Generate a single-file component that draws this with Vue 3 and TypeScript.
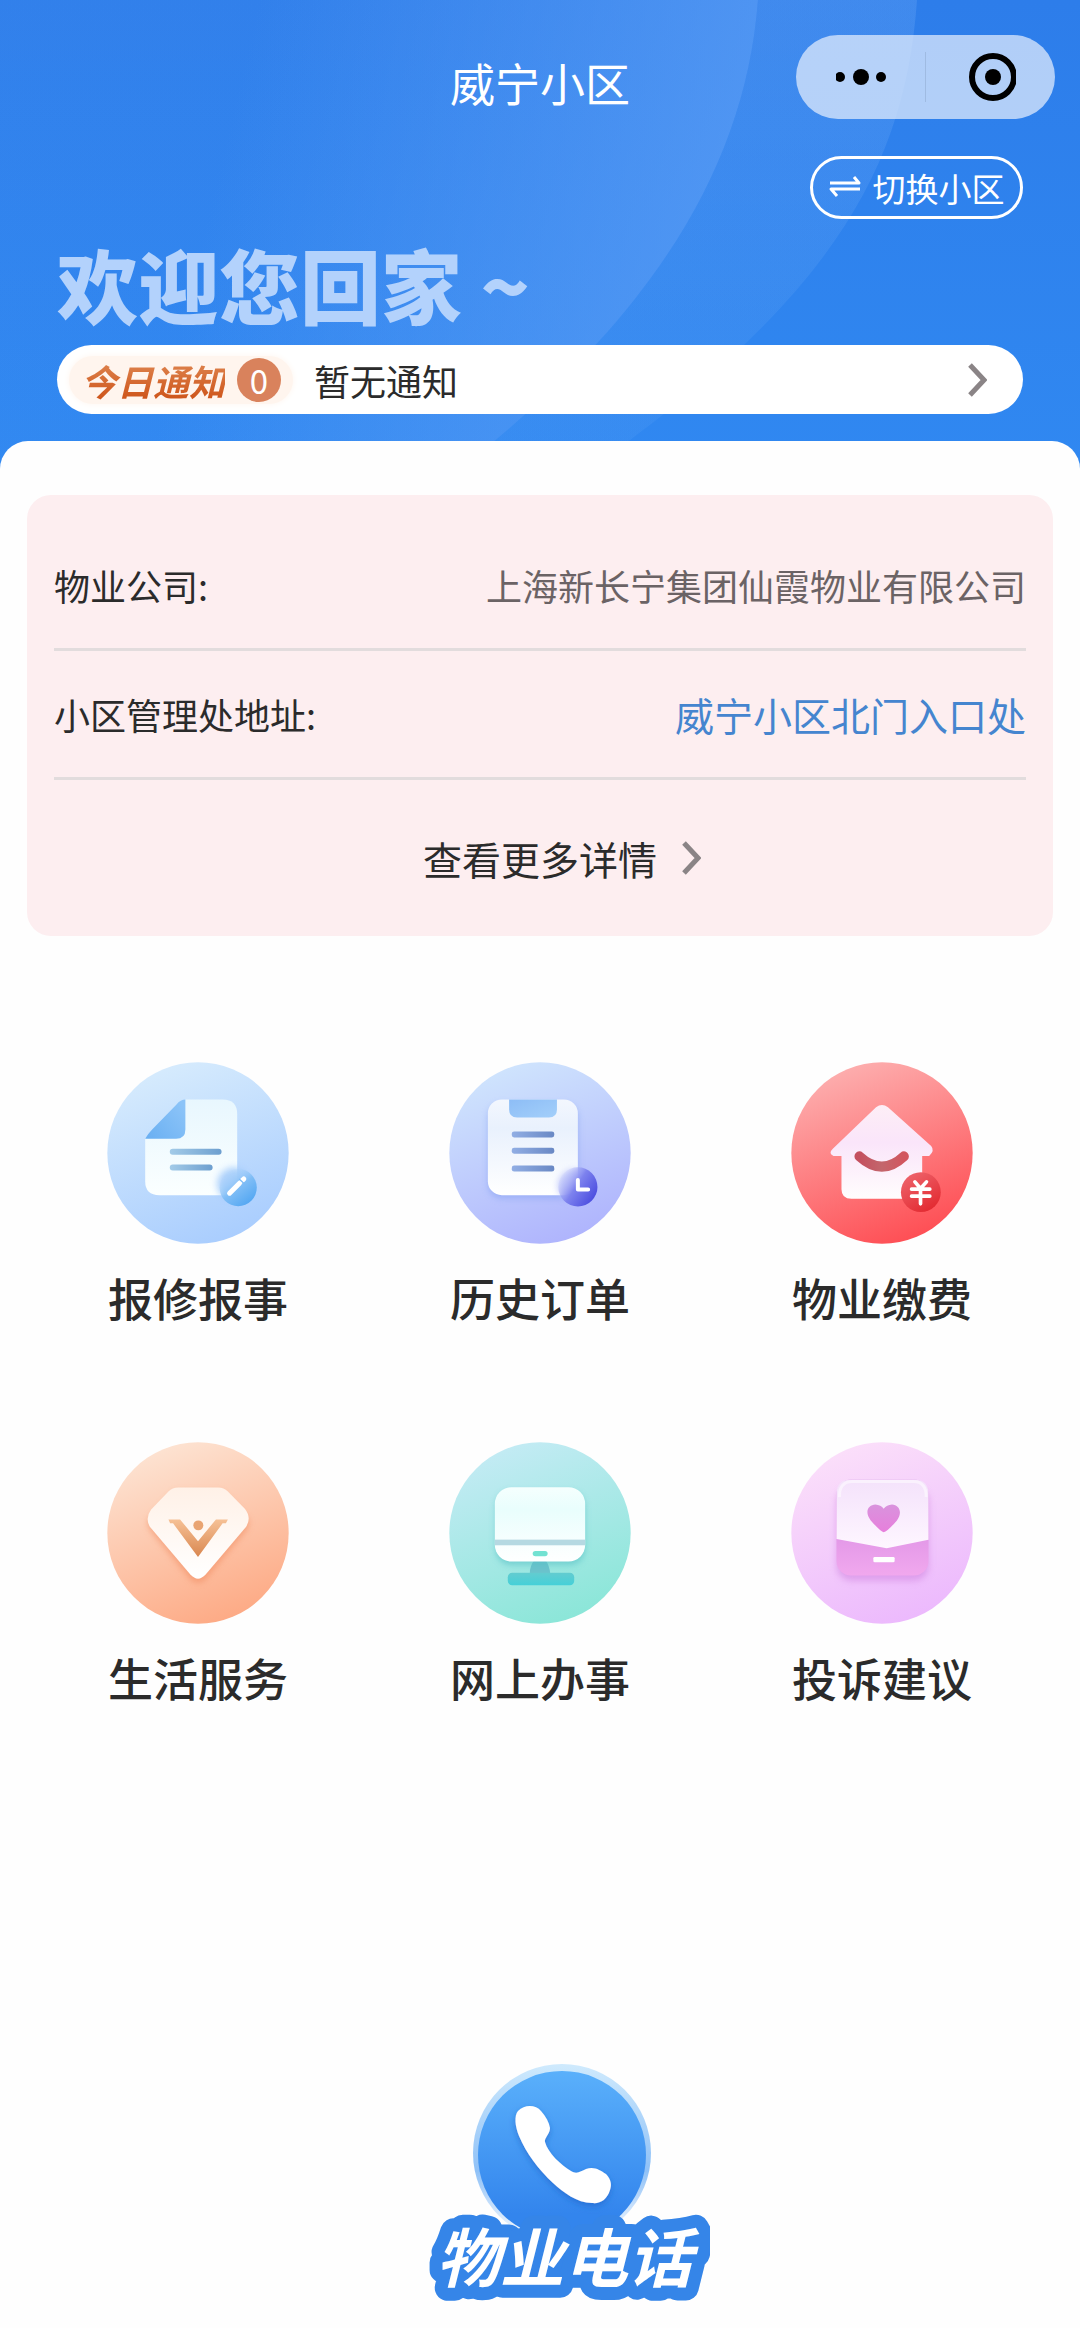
<script setup lang="ts">
type Art = 'repair' | 'orders' | 'payment' | 'life' | 'online' | 'feedback'

interface Service {
  art: Art
  label: string
  viewBox: string
  cx: number
  cy: number
  from: string
  to: string
}

interface InfoRow {
  label: string
  value: string
  link: boolean
}

const community = '威宁小区'
const noticeCount = 0

const rows: InfoRow[] = [
  { label: '物业公司:', value: '上海新长宁集团仙霞物业有限公司', link: false },
  { label: '小区管理处地址:', value: '威宁小区北门入口处', link: true },
]

const services: Service[] = [
  { art: 'repair', label: '报修报事', viewBox: '48 37 548 548', cx: 322, cy: 311, from: '#d6ebfd', to: '#a9cdfe' },
  { art: 'orders', label: '历史订单', viewBox: '55 37 548 548', cx: 329, cy: 311, from: '#cfe4fd', to: '#afb4fd' },
  { art: 'payment', label: '物业缴费', viewBox: '60 37 548 548', cx: 334, cy: 311, from: '#fdaeae', to: '#fe4e54' },
  { art: 'life', label: '生活服务', viewBox: '48 34 548 548', cx: 322, cy: 308, from: '#fde3d2', to: '#fdaa85' },
  { art: 'online', label: '网上办事', viewBox: '55 34 548 548', cx: 329, cy: 308, from: '#c3ebf4', to: '#8be6d8' },
  { art: 'feedback', label: '投诉建议', viewBox: '60 34 548 548', cx: 334, cy: 308, from: '#fbdffa', to: '#ecb9fd' },
]
</script>

<template>
  <div class="page">
    <header class="hero">
      <svg class="hero-bg" viewBox="0 0 1080 470" preserveAspectRatio="none" aria-hidden="true">
        <defs>
          <linearGradient id="sky" x1="0" y1="0" x2="0" y2="1">
            <stop offset="0" stop-color="#2d7dea" />
            <stop offset="1" stop-color="#3088f1" />
          </linearGradient>
          <linearGradient id="beam" gradientUnits="userSpaceOnUse" x1="230" y1="120" x2="740" y2="240">
            <stop offset="0" stop-color="#5b9df5" stop-opacity="0" />
            <stop offset="1" stop-color="#5b9df5" stop-opacity="0.75" />
          </linearGradient>
          <linearGradient id="fade" x1="0" y1="0" x2="0" y2="1">
            <stop offset="0" stop-color="#6aa6f5" stop-opacity="0.26" />
            <stop offset="1" stop-color="#5ba2f5" stop-opacity="0.14" />
          </linearGradient>
        </defs>
        <rect width="1080" height="470" fill="url(#sky)" />
        <path d="M0 0H917C905 170 830 300 590 470H0Z" fill="url(#fade)" opacity="0.3" />
        <path d="M758 0H917C905 170 830 300 590 470H460C650 320 745 170 758 0Z" fill="url(#fade)" />
        <path d="M0 0H758C745 170 650 320 460 470H0Z" fill="url(#beam)" />
      </svg>

      <nav class="nav">
        <h1 class="title">{{ community }}</h1>
        <div class="capsule">
          <button type="button" class="capsule-btn" aria-label="更多">
            <svg viewBox="0 0 50 50" width="50" height="50">
              <circle cx="4" cy="25" r="5" /><circle cx="25" cy="25" r="8" /><circle cx="45" cy="25" r="5" />
            </svg>
          </button>
          <span class="capsule-line"></span>
          <button type="button" class="capsule-btn" aria-label="关闭">
            <svg viewBox="0 0 50 50" width="50" height="50">
              <circle cx="27" cy="25" r="21" fill="none" stroke="#000" stroke-width="6" /><circle cx="27" cy="25" r="8" />
            </svg>
          </button>
        </div>
      </nav>

      <button type="button" class="switch">
        <svg viewBox="0 0 32 24" width="32" height="24" fill="none" stroke="#fff" stroke-width="3" stroke-linejoin="round">
          <path d="M1 7H30L25 1M31 13H2L8 20" />
        </svg>
        <span>切换小区</span>
      </button>

      <p class="welcome">欢迎您回家 ~</p>

      <button type="button" class="notice">
        <span class="notice-tag">
          <em class="notice-name">今日通知</em>
          <span class="notice-count">{{ noticeCount }}</span>
        </span>
        <span class="notice-text">暂无通知</span>
        <svg class="chevron" viewBox="0 0 20 36" width="20" height="36"><path d="M3 3L17 18L3 33" /></svg>
      </button>
    </header>

    <main class="sheet">
      <section class="card">
        <dl class="rows">
          <div v-for="row in rows" :key="row.label" class="row">
            <dt>{{ row.label }}</dt>
            <dd>
              <a v-if="row.link" href="#" class="address">{{ row.value }}</a>
              <template v-else>{{ row.value }}</template>
            </dd>
          </div>
        </dl>
        <button type="button" class="more">
          <span class="more-text">查看更多详情</span>
          <svg class="chevron" viewBox="0 0 20 36" width="20" height="36"><path d="M3 3L17 18L3 33" /></svg>
        </button>
      </section>

      <section class="services">
        <button v-for="s in services" :key="s.art" type="button" class="service">
          <svg class="service-icon" :viewBox="s.viewBox" aria-hidden="true">
            <defs>
              <linearGradient :id="`disc-${s.art}`" x1="0.3" y1="0.02" x2="0.68" y2="0.98">
                <stop offset="0" :stop-color="s.from" />
                <stop offset="1" :stop-color="s.to" />
              </linearGradient>
            </defs>
            <circle :cx="s.cx" :cy="s.cy" r="273" :fill="`url(#disc-${s.art})`" />

            <g v-if="s.art === 'repair'">
              <defs>
                <linearGradient id="r-page" x1="0" y1="0" x2="0" y2="1">
                  <stop offset="0" stop-color="#e8f7fe" /><stop offset="1" stop-color="#fbffff" />
                </linearGradient>
                <linearGradient id="r-fold" x1="0" y1="1" x2="1" y2="0.2">
                  <stop offset="0" stop-color="#69aff2" /><stop offset="1" stop-color="#8cc4f8" />
                </linearGradient>
                <linearGradient id="r-line"><stop offset="0" stop-color="#a3cbe8" /><stop offset="1" stop-color="#6d9fcf" /></linearGradient>
                <linearGradient id="r-ball" x1="0.1" y1="0.1" x2="0.8" y2="1">
                  <stop offset="0" stop-color="#b9dafc" stop-opacity="0" /><stop offset="0.5" stop-color="#7fbdf6" /><stop offset="1" stop-color="#4fa5f2" />
                </linearGradient>
                <filter id="r-glow" x="-50%" y="-50%" width="200%" height="200%"><feGaussianBlur stdDeviation="12" /></filter>
              </defs>
              <path d="M284 150H396Q440 150 440 194V396Q440 438 398 438H206Q163 438 163 396V268Z" fill="url(#r-page)" />
              <path d="M284 150V240Q284 268 256 268H163Q172 252 184 240L258 164Q270 150 284 150Z" fill="url(#r-fold)" />
              <rect x="237" y="298" width="156" height="18" rx="9" fill="url(#r-line)" />
              <rect x="237" y="346" width="129" height="18" rx="9" fill="url(#r-line)" />
              <circle cx="430" cy="405" r="50" fill="#a3cbfb" opacity="0.9" filter="url(#r-glow)" />
              <circle cx="443" cy="415" r="56" fill="url(#r-ball)" />
              <path d="M417 432L447 402M455 394L460 389" stroke="#fff" stroke-width="15" stroke-linecap="round" />
              <path d="M446 389L463 405" stroke="#7dbbf5" stroke-width="4" />
            </g>

            <g v-else-if="s.art === 'orders'">
              <defs>
                <linearGradient id="o-page" x1="0" y1="0" x2="0" y2="1">
                  <stop offset="0" stop-color="#f3f7fe" /><stop offset="0.3" stop-color="#e9f1fd" /><stop offset="1" stop-color="#ffffff" />
                </linearGradient>
                <linearGradient id="o-clip" x1="0" y1="0" x2="1" y2="1">
                  <stop offset="0" stop-color="#8dbdf6" /><stop offset="1" stop-color="#a3cffa" />
                </linearGradient>
                <linearGradient id="o-line"><stop offset="0" stop-color="#91aee4" /><stop offset="1" stop-color="#6988c4" /></linearGradient>
                <linearGradient id="o-ball" x1="0" y1="0.2" x2="0.9" y2="0.8">
                  <stop offset="0" stop-color="#c3cafc" stop-opacity="0" /><stop offset="0.5" stop-color="#7d82ee" /><stop offset="1" stop-color="#4d4fe0" />
                </linearGradient>
                <filter id="o-shadow" x="-20%" y="-20%" width="140%" height="140%"><feGaussianBlur stdDeviation="10" /></filter>
              </defs>
              <rect x="172" y="162" width="272" height="286" rx="42" fill="#7f9cf0" opacity="0.5" filter="url(#o-shadow)" />
              <rect x="172" y="150" width="271" height="288" rx="42" fill="url(#o-page)" />
              <path d="M236 150H380V180Q380 204 356 204H260Q236 204 236 180Z" fill="url(#o-clip)" />
              <rect x="244" y="246" width="128" height="18" rx="7" fill="url(#o-line)" />
              <rect x="244" y="295" width="128" height="18" rx="7" fill="url(#o-line)" />
              <rect x="244" y="349" width="128" height="18" rx="7" fill="url(#o-line)" />
              <circle cx="432" cy="410" r="50" fill="#b3bcf9" opacity="0.7" filter="url(#o-shadow)" />
              <circle cx="443" cy="413" r="59" fill="url(#o-ball)" />
              <path d="M443 392V421H474" fill="none" stroke="#fff" stroke-width="12" stroke-linecap="round" stroke-linejoin="round" />
            </g>

            <g v-else-if="s.art === 'payment'">
              <defs>
                <linearGradient id="p-house" x1="0" y1="0" x2="0" y2="1">
                  <stop offset="0" stop-color="#fdeef6" /><stop offset="0.4" stop-color="#fae5fa" /><stop offset="1" stop-color="#fffdfd" />
                </linearGradient>
                <linearGradient id="p-smile"><stop offset="0" stop-color="#c4505f" /><stop offset="0.5" stop-color="#c3666c" /><stop offset="1" stop-color="#d2565f" /></linearGradient>
                <linearGradient id="p-ball" x1="0" y1="0" x2="0.6" y2="1">
                  <stop offset="0" stop-color="#ef6a72" /><stop offset="1" stop-color="#e32c33" />
                </linearGradient>
              </defs>
              <path d="M316 173Q334 160 352 173L482 290Q494 304 476 320H455V420Q455 449 426 449H242Q212 449 212 420V320H188Q171 312 186 298Z" fill="url(#p-house)" />
              <path d="M266 321Q334 383 400 321" fill="none" stroke="url(#p-smile)" stroke-width="30" stroke-linecap="round" />
              <circle cx="451" cy="429" r="60" fill="url(#p-ball)" />
              <path d="M433 398L450 418L468 398M450 418V464M423 420H478M423 441H478" fill="none" stroke="#fff" stroke-width="11" stroke-linecap="round" stroke-linejoin="round" />
            </g>

            <g v-else-if="s.art === 'life'">
              <defs>
                <linearGradient id="l-gem" x1="0" y1="0" x2="0" y2="1">
                  <stop offset="0" stop-color="#fff1e7" /><stop offset="1" stop-color="#ffffff" />
                </linearGradient>
                <linearGradient id="l-vee" x1="0" y1="0" x2="0" y2="1">
                  <stop offset="0" stop-color="#f6c196" /><stop offset="1" stop-color="#d98750" />
                </linearGradient>
                <filter id="l-shadow" x="-20%" y="-20%" width="140%" height="140%"><feGaussianBlur stdDeviation="10" /></filter>
              </defs>
              <path d="M250 184H394L474 268Q476 290 464 304L344 448Q322 468 300 448L182 304Q168 286 172 268Z" fill="#f0885c" opacity="0.55" filter="url(#l-shadow)" />
              <path d="M262 171H383Q400 171 412 183L463 235Q484 262 467 289L345 433Q322 458 299 433L177 289Q162 262 181 237L233 183Q245 171 262 171Z" fill="url(#l-gem)" />
              <path d="M233 267H268L322 333L376 267H412L406 279H396L322 380L247 279H238Z" fill="url(#l-vee)" />
              <circle cx="323" cy="285" r="15" fill="#e9a472" />
            </g>

            <g v-else-if="s.art === 'online'">
              <defs>
                <linearGradient id="n-screen" x1="0" y1="0" x2="0" y2="1">
                  <stop offset="0" stop-color="#f5fffe" /><stop offset="0.3" stop-color="#e9fefd" /><stop offset="1" stop-color="#ffffff" />
                </linearGradient>
                <linearGradient id="n-base" x1="0" y1="0" x2="0" y2="1">
                  <stop offset="0" stop-color="#63ccd0" /><stop offset="1" stop-color="#45d0d8" />
                </linearGradient>
                <filter id="n-shadow" x="-20%" y="-20%" width="140%" height="140%"><feGaussianBlur stdDeviation="9" /></filter>
              </defs>
              <path d="M312 390H346Q358 406 360 432H298Q298 406 312 390Z" fill="#6bc3cc" />
              <rect x="232" y="428" width="200" height="37" rx="13" fill="url(#n-base)" />
              <rect x="196" y="182" width="268" height="222" rx="46" fill="#55bfc4" opacity="0.6" filter="url(#n-shadow)" />
              <rect x="193" y="170" width="272" height="224" rx="50" fill="url(#n-screen)" />
              <rect x="193" y="328" width="272" height="17" fill="#b5d9e2" />
              <rect x="307" y="362" width="45" height="16" rx="8" fill="#72e2d2" />
            </g>

            <g v-else>
              <defs>
                <linearGradient id="f-flap" x1="0" y1="0" x2="0" y2="1">
                  <stop offset="0" stop-color="#f4e2fb" /><stop offset="1" stop-color="#fef6ff" />
                </linearGradient>
                <linearGradient id="f-body" x1="0" y1="0" x2="0" y2="1">
                  <stop offset="0.5" stop-color="#df94e6" /><stop offset="1" stop-color="#f1a8ee" />
                </linearGradient>
                <linearGradient id="f-heart" x1="0" y1="0" x2="0" y2="1">
                  <stop offset="0" stop-color="#d993dd" /><stop offset="1" stop-color="#e77fdc" />
                </linearGradient>
                <filter id="f-shadow" x="-20%" y="-20%" width="140%" height="140%"><feGaussianBlur stdDeviation="11" /></filter>
              </defs>
              <rect x="198" y="170" width="276" height="282" rx="44" fill="#d084e0" opacity="0.6" filter="url(#f-shadow)" />
              <rect x="197" y="147" width="277" height="289" rx="44" fill="url(#f-body)" />
              <path d="M197 326V191Q197 147 241 147H430Q474 147 474 191V328L348 354Z" fill="url(#f-flap)" />
              <path d="M206 200Q204 153 246 153H428Q468 153 467 200" fill="none" stroke="#fff" stroke-width="9" opacity="0.5" />
              <path d="M339 306Q330 304 300 270C280 243 293 223 314 222Q331 223 339 235Q348 223 364 222C386 223 397 246 379 270Q350 304 339 306Z" fill="url(#f-heart)" />
              <rect x="308" y="380" width="64" height="16" rx="4" fill="#fff" />
            </g>
          </svg>
          <span class="service-label">{{ s.label }}</span>
        </button>
      </section>
    </main>

    <footer class="dock">
      <button type="button" class="phone" aria-label="物业电话">
        <svg viewBox="0 0 290 250" width="290" height="250">
          <defs>
            <linearGradient id="call" x1="0" y1="0" x2="0" y2="1">
              <stop offset="0" stop-color="#5ab0fb" /><stop offset="0.85" stop-color="#3385ed" />
            </linearGradient>
            <linearGradient id="rim" x1="0" y1="0" x2="0" y2="1">
              <stop offset="0" stop-color="#cfeafd" /><stop offset="0.6" stop-color="#8fc1f7" /><stop offset="1" stop-color="#ffffff" />
            </linearGradient>
            <filter id="call-shadow" x="-20%" y="-20%" width="150%" height="150%">
              <feDropShadow dx="0" dy="3" stdDeviation="3" flood-color="#1c63c8" flood-opacity="0.6" />
            </filter>
          </defs>
          <circle cx="142" cy="93" r="89" fill="url(#rim)" />
          <circle cx="142" cy="95" r="84" fill="url(#call)" />
          <path
            d="M98 51C105 44 116 45 121 51C126 57 129 62 130 68C130 74 124 78 125 82C128 93 141 105 151 111C157 115 161 111 166 109C174 106 180 110 186 114C191 119 192 125 190 130C187 140 180 144 172 143C157 143 143 132 133 123C119 110 106 93 99 76C95 66 94 56 98 51Z"
            fill="#fff"
            filter="url(#call-shadow)"
          />
          <text class="phone-text" x="144" y="222" text-anchor="middle" aria-hidden="true">物业电话</text>
        </svg>
      </button>
    </footer>
  </div>
</template>

<style>
body {
  margin: 0;
  background: #fefefe;
}
</style>

<style scoped>
.page {
  display: flex;
  flex-direction: column;
  min-height: 100vh;
  background: #fefefe;
  color: #2b2b2b;
  font-family: 'Noto Sans CJK SC', 'Noto Sans', sans-serif;
}

button {
  margin: 0;
  padding: 0;
  border: 0;
  background: none;
  color: inherit;
  font: inherit;
  cursor: pointer;
}

svg {
  display: block;
  flex: none;
}

.hero {
  position: relative;
  display: flex;
  flex-direction: column;
  padding: 35px 57px 55px;
  color: #fff;
}

.hero-bg {
  position: absolute;
  inset: 0;
  width: 100%;
  height: 100%;
}

.nav,
.switch,
.welcome,
.notice {
  position: relative;
}

.nav {
  display: grid;
  grid-template-columns: 1fr auto 1fr;
  align-items: center;
  margin: 0 -32px;
}

.title {
  grid-column: 2;
  margin: 0;
  padding-top: 12px;
  font-size: 45px;
  font-weight: 400;
  line-height: 60px;
}

.capsule {
  display: flex;
  align-items: center;
  justify-self: end;
  width: 259px;
  height: 84px;
  border-radius: 42px;
  background: rgba(224, 235, 252, 0.74);
}

.capsule-btn {
  display: flex;
  flex: 1;
  justify-content: center;
}

.capsule-line {
  width: 1px;
  height: 50px;
  background: #9fbbe2;
}

.switch {
  display: flex;
  align-items: center;
  justify-content: center;
  align-self: flex-end;
  gap: 12px;
  box-sizing: border-box;
  width: 213px;
  height: 63px;
  margin-top: 37px;
  border: 3px solid #fff;
  border-radius: 32px;
  font-size: 33px;
  line-height: 48px;
}

.welcome {
  margin: 16px 0 14px;
  color: #b3d2fc;
  font-size: 81px;
  font-weight: 900;
  line-height: 96px;
}

.notice {
  display: flex;
  align-items: center;
  height: 69px;
  padding: 0 36px 0 12px;
  border-radius: 35px;
  background: #fff;
  color: #2b2b2b;
  font-size: 36px;
  line-height: 48px;
  text-align: left;
}

.notice-tag {
  display: flex;
  align-items: center;
  gap: 12px;
  padding: 0 12px;
  border-radius: 24px;
  background: #fff5ee;
  box-shadow: 0 0 6px #fff5ee;
}

.notice-name {
  background: linear-gradient(#e08a55, #cc4f14);
  background-clip: text;
  color: transparent;
  font-weight: 700;
}

.notice-count {
  width: 44px;
  height: 44px;
  border-radius: 50%;
  background: #d9825c;
  color: #fff;
  font-size: 33px;
  line-height: 44px;
  text-align: center;
}

.notice-text {
  flex: 1;
  margin-left: 21px;
}

.chevron {
  fill: none;
  stroke: #8a8486;
  stroke-width: 5;
}

.sheet {
  position: relative;
  margin-top: -28px;
  padding: 54px 27px 0;
  border-radius: 28px 28px 0 0;
  background: #fefefe;
}

.card {
  padding: 27px 27px 0;
  border-radius: 24px;
  background: #fdeef0;
}

.rows {
  margin: 0;
}

.row {
  display: flex;
  align-items: center;
  justify-content: space-between;
  height: 126px;
  border-bottom: 3px solid #e2dcdd;
  font-size: 36px;
  line-height: 60px;
}

.row dd {
  margin: 0;
  color: #6b6365;
}

.address {
  color: #4585cf;
  font-size: 39px;
  text-decoration: none;
}

.more {
  display: grid;
  grid-template-columns: 1fr auto 1fr;
  align-items: center;
  gap: 24px;
  width: 100%;
  height: 156px;
  font-size: 39px;
  line-height: 60px;
}

.more-text {
  grid-column: 2;
}

.services {
  display: grid;
  grid-template-columns: repeat(3, 1fr);
  gap: 114px 0;
  padding: 126px 0 60px;
}

.service {
  display: flex;
  flex-direction: column;
  align-items: center;
  gap: 24px;
}

.service-icon {
  width: 182px;
  height: 182px;
}

.service-label {
  font-size: 45px;
  font-weight: 500;
  line-height: 60px;
}

.dock {
  display: flex;
  justify-content: center;
  margin-top: auto;
  padding: 0 0 18px 50px;
}

.phone-text {
  fill: #fff;
  stroke: #3585e8;
  stroke-width: 26px;
  stroke-linejoin: round;
  paint-order: stroke fill;
  font-size: 64px;
  font-style: italic;
  font-weight: 700;
}
</style>
